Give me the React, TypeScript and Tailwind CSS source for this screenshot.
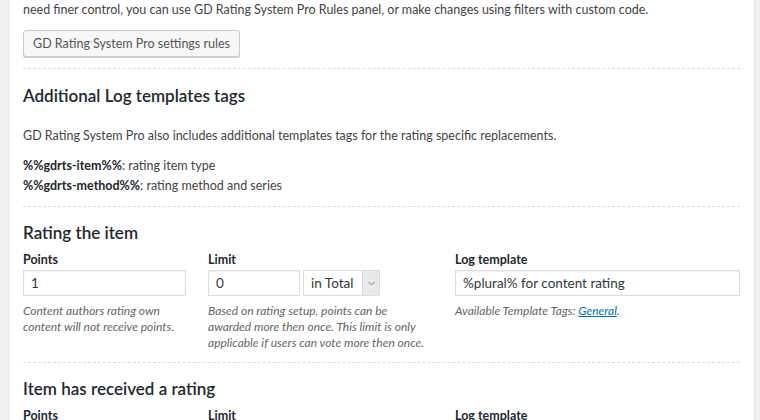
import React from 'react';

const font = { fontFamily: 'Lato, "Open Sans", sans-serif' };

const Divider = () => <div className="border-t border-dashed border-[#dddddd]" />;

const Field: React.FC<{ label: string; children: React.ReactNode }> = ({ label, children }) => (
  <div>
    <label className="block text-[12.5px] font-bold leading-[18px] text-[#23282d] mb-px">{label}</label>
    {children}
  </div>
);

const inputCls =
  'h-[26px] border border-[#dddddd] bg-white px-[7px] text-[13.5px] text-[#32373c] shadow-[inset_0_1px_2px_rgba(0,0,0,0.07)] outline-none';

const RuleBlock: React.FC<{ title: string; points: string; limit: string; template: string }> = ({
  title,
  points,
  limit,
  template,
}) => (
  <div>
    <h3 className="text-[17px] font-semibold leading-6 text-[#23282d] mt-[14px] mb-[6px]">{title}</h3>
    <div className="grid grid-cols-[163px_225px_1fr] gap-x-[22px]">
      <Field label="Points">
        <input className={`${inputCls} w-[163px]`} defaultValue={points} />
        <p className="mt-[7px] text-[12px] italic leading-4 text-[#666666]">
          Content authors rating own content will not receive points.
        </p>
      </Field>
      <Field label="Limit">
        <div className="flex gap-[3px]">
          <input className={`${inputCls} w-[92px]`} defaultValue={limit} />
          <div className="flex h-[26px] w-[77px] border border-[#dddddd] bg-white">
            <span className="flex-1 pl-[7px] text-[13.5px] leading-6 text-[#32373c]">in Total</span>
            <span className="flex w-[17px] items-center justify-center border-l border-[#d5d5d5] bg-[#e9e9e9] text-[#777777]">
              <svg width="7" height="5" viewBox="0 0 7 5" fill="none" stroke="currentColor" strokeWidth="1">
                <path d="M0.5 1 L3.5 4 L6.5 1" />
              </svg>
            </span>
          </div>
        </div>
        <p className="mt-[7px] text-[12px] italic leading-4 text-[#666666]">
          Based on rating setup, points can be awarded more then once. This limit is only applicable if users can
          vote more then once.
        </p>
      </Field>
      <Field label="Log template">
        <input className={`${inputCls} w-full`} defaultValue={template} />
        <p className="mt-[7px] text-[12px] italic leading-4 text-[#666666]">
          Available Template Tags:{' '}
          <a className="text-[#0073aa] underline" href="#">
            General
          </a>
          .
        </p>
      </Field>
    </div>
  </div>
);

export default function App() {
  return (
    <div className="min-h-screen bg-[#f1f1f1] pl-2 pr-[5px]" style={font}>
      <div className="h-[420px] overflow-hidden border-x border-[#e5e5e5] bg-white px-[14px] text-[12.5px] leading-5 text-[#444444]">
        <p>
          need finer control, you can use GD Rating System Pro Rules panel, or make changes using filters with custom
          code.
        </p>
        <button className="mt-[10px] mb-[11px] h-[27px] rounded-[3px] border border-[#cccccc] bg-[#f7f7f7] px-[9px] text-[12.5px] text-[#555555] shadow-[0_1px_0_#cccccc]">
          GD Rating System Pro settings rules
        </button>
        <Divider />
        <h3 className="text-[17px] font-semibold leading-6 text-[#23282d] mt-[15px] mb-[18px]">
          Additional Log templates tags
        </h3>
        <p>GD Rating System Pro also includes additional templates tags for the rating specific replacements.</p>
        <div className="mt-[10px] mb-[10px]">
          <p>
            <b className="font-bold text-[#23282d]">%%gdrts-item%%</b>: rating item type
          </p>
          <p>
            <b className="font-bold text-[#23282d]">%%gdrts-method%%</b>: rating method and series
          </p>
        </div>
        <Divider />
        <RuleBlock title="Rating the item" points="1" limit="0" template="%plural% for content rating" />
        <div className="mt-[11px]">
          <Divider />
        </div>
        <RuleBlock title="Item has received a rating" points="1" limit="0" template="%plural% for your content getting a rating" />
      </div>
    </div>
  );
}
